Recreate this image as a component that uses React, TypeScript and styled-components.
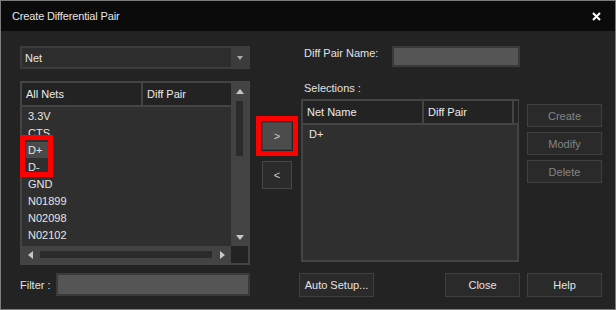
import React from 'react';
import styled, { createGlobalStyle, css } from 'styled-components';

const Global = createGlobalStyle`
  html, body { margin: 0; padding: 0; background: #232323; }
  body {
    font-family: "Liberation Sans", Arial, sans-serif;
    font-size: 11px;
    color: #e2e2e2;
  }
  * { box-sizing: border-box; }
`;

const Window = styled.div`
  width: 616px;
  height: 310px;
  border: 1px solid #7c7c7c;
  background: #232323;
  display: flex;
  flex-direction: column;
  overflow: hidden;
`;

const TitleBar = styled.div`
  height: 30px;
  flex: none;
  background: #0b0b0b;
  display: flex;
  align-items: center;
  justify-content: space-between;
  padding: 0 14px 0 11px;
`;

const Title = styled.span`
  color: #e6e6e6;
  font-size: 11px;
  letter-spacing: -0.15px;
`;

const Body = styled.div`
  flex: 1;
  display: flex;
  padding: 15px 0 0 19px;
`;

const LeftCol = styled.div`
  width: 230px;
  display: flex;
  flex-direction: column;
`;

const Dropdown = styled.div`
  height: 23px;
  border: 2px solid #3c3c3c;
  display: flex;
  margin-bottom: 12px;
`;

const DropField = styled.div`
  flex: 1;
  background: #2d2d2d;
  padding-left: 3px;
  display: flex;
  align-items: center;
  color: #e8e8e8;
`;

const DropArrow = styled.div`
  width: 17px;
  background: #3c3c3c;
  display: flex;
  align-items: center;
  justify-content: center;
`;

type Dir = 'up' | 'down' | 'left' | 'right';

const Tri = styled.span<{ $dir: Dir; $size?: number; $color?: string }>`
  width: 0;
  height: 0;
  display: block;
  ${({ $dir, $size = 4, $color = '#c8c8c8' }) => {
    const s = $size;
    switch ($dir) {
      case 'up':
        return css`border-left: ${s}px solid transparent; border-right: ${s}px solid transparent; border-bottom: ${s + 1}px solid ${$color};`;
      case 'down':
        return css`border-left: ${s}px solid transparent; border-right: ${s}px solid transparent; border-top: ${s + 1}px solid ${$color};`;
      case 'left':
        return css`border-top: ${s}px solid transparent; border-bottom: ${s}px solid transparent; border-right: ${s + 1}px solid ${$color};`;
      default:
        return css`border-top: ${s}px solid transparent; border-bottom: ${s}px solid transparent; border-left: ${s + 1}px solid ${$color};`;
    }
  }}
`;

const ListBox = styled.div<{ $h: number }>`
  position: relative;
  height: ${(p) => p.$h}px;
  border: 2px solid #444444;
  background: #444444;
  display: grid;
  grid-template-columns: 1fr 17px;
  grid-template-rows: 1fr 17px;
`;

const ListContent = styled.div`
  display: flex;
  flex-direction: column;
  overflow: hidden;
`;

const Header = styled.div<{ $cols: string }>`
  display: grid;
  grid-template-columns: ${(p) => p.$cols};
  column-gap: 2px;
  height: 24px;
  padding-bottom: 2px;
  background: #444444;
  flex: none;
`;

const HeaderCell = styled.div`
  background: #232323;
  color: #ececec;
  padding-left: 4px;
  display: flex;
  align-items: center;
  white-space: nowrap;
  overflow: hidden;
`;

const Rows = styled.div`
  flex: 1;
  background: #2f2f2f;
  padding-top: 1px;
  overflow: hidden;
`;

const Row = styled.div`
  height: 17px;
  padding-left: 4px;
  display: flex;
  align-items: flex-start;
`;

const RowText = styled.span<{ $selected?: boolean }>`
  display: inline-block;
  height: 16px;
  line-height: 16px;
  padding: 0 6px 0 2px;
  color: #e6e6e6;
  background: ${(p) => (p.$selected ? '#4a4a4a' : 'transparent')};
`;

const VScroll = styled.div`
  background: #434343;
  display: flex;
  flex-direction: column;
  align-items: center;
`;

const ScrollBtn = styled.div`
  width: 17px;
  height: 17px;
  flex: none;
  display: flex;
  align-items: center;
  justify-content: center;
`;

const VTrack = styled.div`
  flex: 1;
  width: 100%;
  display: flex;
  justify-content: center;
`;

const VThumb = styled.div`
  width: 7px;
  height: 55px;
  margin-top: 1px;
  background: #2b2b2b;
`;

const HScroll = styled.div`
  background: #434343;
  display: flex;
  align-items: center;
`;

const HTrack = styled.div`
  flex: 1;
  height: 100%;
  display: flex;
  align-items: center;
`;

const HThumb = styled.div`
  height: 7px;
  width: 172px;
  margin-left: 1px;
  background: #2b2b2b;
`;

const Corner = styled.div`
  background: #232323;
`;

const Annot = styled.div`
  position: absolute;
  left: -2px;
  top: 52px;
  width: 33px;
  height: 42px;
  border: 5px solid #ff0000;
  pointer-events: none;
`;

const FilterRow = styled.div`
  margin-top: 8px;
  height: 23px;
  display: flex;
  align-items: center;
`;

const FieldLabel = styled.span<{ $w?: number; $pl?: number; $mt?: number }>`
  width: ${(p) => (p.$w ? `${p.$w}px` : 'auto')};
  padding-left: ${(p) => p.$pl ?? 0}px;
  margin-top: ${(p) => p.$mt ?? 0}px;
  color: #e2e2e2;
  line-height: 14px;
  white-space: nowrap;
  flex: none;
`;

const TextInput = styled.div<{ $w?: number; $h: number }>`
  ${(p) => (p.$w ? `width: ${p.$w}px; flex: none;` : 'flex: 1;')}
  height: ${(p) => p.$h}px;
  background: #555555;
  border: 2px solid #3a3a3a;
`;

const MidCol = styled.div`
  width: 49px;
  padding-left: 6px;
  display: flex;
  flex-direction: column;
  align-items: flex-start;
`;

const RedFrame = styled.div`
  margin-top: 70px;
  border: 5px solid #ff0000;
  padding: 1px;
`;

const MoveBtn = styled.button<{ $active?: boolean }>`
  width: 30px;
  height: 28px;
  margin: 0;
  padding: 0;
  font-family: "Liberation Sans", Arial, sans-serif;
  font-size: 11px;
  color: #cfcfcf;
  background: ${(p) => (p.$active ? '#4c4c4c' : '#2b2b2b')};
  border: 1px solid ${(p) => (p.$active ? '#3e3e3e' : '#474747')};
  display: flex;
  align-items: center;
  justify-content: center;
`;

const BackBtn = styled(MoveBtn)`
  margin-top: 5px;
  margin-left: 6px;
`;

const RightCol = styled.div`
  width: 303px;
  display: flex;
  flex-direction: column;
`;

const NameRow = styled.div`
  height: 21px;
  display: flex;
  align-items: flex-start;
`;

const SectionLabel = styled.div`
  margin-top: 14px;
  padding-left: 5px;
  line-height: 14px;
  color: #e2e2e2;
`;

const MiddleRow = styled.div`
  margin-top: 4px;
  display: flex;
  gap: 8px;
  padding-left: 2px;
`;

const SelList = styled.div`
  width: 218px;
  height: 163px;
  border: 2px solid #444444;
  background: #444444;
  display: flex;
  flex-direction: column;
`;

const SideButtons = styled.div`
  margin-top: 5px;
  display: flex;
  flex-direction: column;
  gap: 5px;
`;

const DlgButton = styled.button<{ $disabled?: boolean; $h?: number }>`
  width: 75px;
  height: ${(p) => p.$h ?? 23}px;
  margin: 0;
  padding: 0;
  font-family: "Liberation Sans", Arial, sans-serif;
  font-size: 11px;
  color: ${(p) => (p.$disabled ? '#858585' : '#e4e4e4')};
  background: #2a2a2a;
  border: 1px solid #3f3f3f;
`;

const BottomRow = styled.div`
  margin-top: 11px;
  display: flex;
  gap: 7px;
`;

const Spacer = styled.div`
  flex: 1;
`;

const CloseIcon = () => (
  <svg width="9" height="9" viewBox="0 0 9 9">
    <path d="M1 1 L8 8 M8 1 L1 8" stroke="#ffffff" strokeWidth="2" />
  </svg>
);

const nets = ['3.3V', 'CTS', 'D+', 'D-', 'GND', 'N01899', 'N02098', 'N02102'];

export default function App() {
  return (
    <>
      <Global />
      <Window>
        <TitleBar>
          <Title>Create Differential Pair</Title>
          <CloseIcon />
        </TitleBar>
        <Body>
          <LeftCol>
            <Dropdown>
              <DropField>Net</DropField>
              <DropArrow>
                <Tri $dir="down" $size={3} $color="#a8a8a8" />
              </DropArrow>
            </Dropdown>
            <ListBox $h={184}>
              <ListContent>
                <Header $cols="119px 88px">
                  <HeaderCell>All Nets</HeaderCell>
                  <HeaderCell>Diff Pair</HeaderCell>
                </Header>
                <Rows>
                  {nets.map((n) => (
                    <Row key={n}>
                      <RowText $selected={n === 'D+'}>{n}</RowText>
                    </Row>
                  ))}
                </Rows>
              </ListContent>
              <VScroll>
                <ScrollBtn>
                  <Tri $dir="up" $size={4} />
                </ScrollBtn>
                <VTrack>
                  <VThumb />
                </VTrack>
                <ScrollBtn>
                  <Tri $dir="down" $size={4} />
                </ScrollBtn>
              </VScroll>
              <HScroll>
                <ScrollBtn>
                  <Tri $dir="left" $size={4} />
                </ScrollBtn>
                <HTrack>
                  <HThumb />
                </HTrack>
                <ScrollBtn>
                  <Tri $dir="right" $size={4} />
                </ScrollBtn>
              </HScroll>
              <Corner />
              <Annot />
            </ListBox>
            <FilterRow>
              <FieldLabel $w={36}>Filter :</FieldLabel>
              <TextInput $h={23} />
            </FilterRow>
          </LeftCol>
          <MidCol>
            <RedFrame>
              <MoveBtn $active>&gt;</MoveBtn>
            </RedFrame>
            <BackBtn>&lt;</BackBtn>
          </MidCol>
          <RightCol>
            <NameRow>
              <FieldLabel $w={93} $pl={5} $mt={0}>Diff Pair Name:</FieldLabel>
              <TextInput $w={128} $h={21} />
            </NameRow>
            <SectionLabel>Selections :</SectionLabel>
            <MiddleRow>
              <SelList>
                <Header $cols="119px 88px 1fr">
                  <HeaderCell>Net Name</HeaderCell>
                  <HeaderCell>Diff Pair</HeaderCell>
                  <HeaderCell />
                </Header>
                <Rows>
                  <Row>
                    <RowText>D+</RowText>
                  </Row>
                </Rows>
              </SelList>
              <SideButtons>
                <DlgButton $disabled>Create</DlgButton>
                <DlgButton $disabled>Modify</DlgButton>
                <DlgButton $disabled>Delete</DlgButton>
              </SideButtons>
            </MiddleRow>
            <BottomRow>
              <DlgButton $h={24}>Auto Setup...</DlgButton>
              <Spacer />
              <DlgButton $h={24}>Close</DlgButton>
              <DlgButton $h={24}>Help</DlgButton>
            </BottomRow>
          </RightCol>
        </Body>
      </Window>
    </>
  );
}
